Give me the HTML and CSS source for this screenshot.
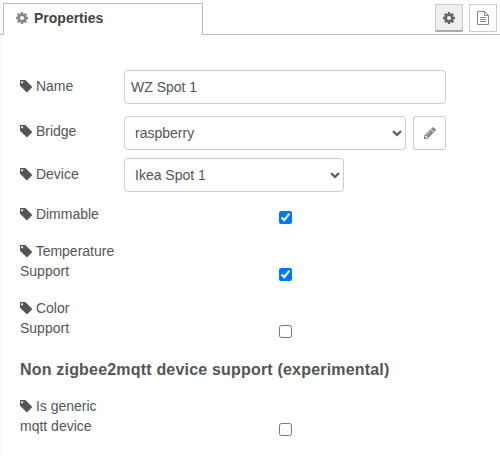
FILE: index.html
```
<!DOCTYPE html>
<html lang="en">
<head>
<meta charset="utf-8">
<title>Properties</title>
<link rel="stylesheet" href="styles.css">
</head>
<body>
<svg class="defs" width="0" height="0">
  <symbol id="tag" viewBox="192 256 1452 1408"><path d="M576 448q0-53-37.500-90.500t-90.500-37.500-90.500 37.500-37.500 90.500 37.500 90.500 90.500 37.500 90.500-37.500 37.500-90.500zm1067 576q0 53-37 90l-491 492q-39 37-91 37-53 0-90-37l-715-716q-38-37-64.500-101t-26.500-117v-416q0-52 38-90t90-38h416q53 0 117 26.500t102 64.500l715 714q37 39 37 91z" transform="translate(0 64)"/></symbol>
  <symbol id="cog" viewBox="128 128 1536 1536"><path d="M1152 896q0-106-75-181t-181-75-181 75-75 181 75 181 181 75 181-75 75-181zm512-109v222q0 12-8 23t-20 13l-185 28q-19 54-39 91 35 50 107 138 10 12 10 25t-9 23q-27 37-99 108t-94 71q-12 0-26-9l-138-108q-44 23-91 38-16 136-29 186-7 28-36 28h-222q-14 0-24.500-8.500t-11.500-21.500l-28-184q-49-16-90-37l-141 107q-10 9-25 9-14 0-25-11-126-114-165-168-7-10-7-23 0-12 8-23 15-21 51-66.500t54-70.500q-27-50-41-99l-183-27q-13-2-21-12.500t-8-23.500v-222q0-12 8-23t19-13l186-28q14-46 39-92-40-57-107-138-10-12-10-24 0-10 9-23 26-36 98.500-107.500t94.500-71.500q13 0 26 10l138 107q44-23 91-38 16-136 29-186 7-28 36-28h222q14 0 24.500 8.500t11.500 21.500l28 184q49 16 90 37l142-107q9-9 24-9 13 0 25 10 129 119 165 170 7 8 7 22 0 12-8 23-15 21-51 66.500t-54 70.500q26 50 41 98l183 28q13 2 21 12.500t8 23.500z"/></symbol>
</svg>
<header class="tabs">
  <div class="tab"><svg class="icon cog"><use href="#cog"/></svg><span>Properties</span></div>
  <div class="tools">
    <button class="tool active" aria-label="Properties"><svg class="icon"><use href="#cog"/></svg></button>
    <button class="tool" aria-label="Description"><svg class="doc" viewBox="0 0 12 14"><path d="M.5.500h7l4 4v9H.5zM7.500.500v4h4M3 6.500h6M3 8.500h6M3 10.500h6"/></svg></button>
  </div>
</header>
<main class="form">
  <div class="row name"><label><svg class="icon tag"><use href="#tag"/></svg> Name</label><input class="field" type="text" value="WZ Spot 1"></div>
  <div class="row bridge"><label><svg class="icon tag"><use href="#tag"/></svg> Bridge</label><select class="field"><option>raspberry</option></select><button class="edit" aria-label="Edit"><svg class="pencil" viewBox="128 128 1536 1536"><path d="M491 1536l91-91-235-235-91 91v107h128v128h107zm523-928q0-22-22-22-10 0-17 7l-542 542q-7 7-7 17 0 22 22 22 10 0 17-7l542-542q7-7 7-17zm-54-192l416 416-832 832h-416v-416zm683 96q0 53-37 90l-166 166-416-416 166-165q36-38 90-38 53 0 91 38l235 234q37 39 37 91z"/></svg></button></div>
  <div class="row device"><label><svg class="icon tag"><use href="#tag"/></svg> Device</label><select class="field"><option>Ikea Spot 1</option></select></div>
  <div class="row check"><label><svg class="icon tag"><use href="#tag"/></svg> Dimmable</label><input type="checkbox" checked></div>
  <div class="row check"><label><svg class="icon tag"><use href="#tag"/></svg> Temperature Support</label><input type="checkbox" checked></div>
  <div class="row check"><label><svg class="icon tag"><use href="#tag"/></svg> Color<br>Support</label><input type="checkbox"></div>
  <h4>Non zigbee2mqtt device support (experimental)</h4>
  <div class="row check"><label><svg class="icon tag"><use href="#tag"/></svg> Is generic mqtt device</label><input type="checkbox"></div>
</main>
</body>
</html>
```
FILE: styles.css
```
* { box-sizing: border-box; }
body {
  margin: 0;
  height: 456px;
  overflow: hidden;
  background: linear-gradient(to right, #f6f6f6, #fff 3px);
  color: #555;
  font: 14px/20px "Liberation Sans", Arial, sans-serif;
}
.defs { display: none; }
.icon { width: 12px; height: 12px; fill: currentColor; }
.tabs {
  display: flex;
  justify-content: space-between;
  height: 35px;
  padding: 3px 3px 0;
  border-bottom: 1px solid #bbb;
}
.tab {
  display: flex;
  gap: 6px;
  width: 200px;
  height: 32px;
  padding: 4px 12px;
  border: 1px solid #bbb;
  border-bottom: 0;
  background: #fff;
  color: #444;
  font-weight: bold;
}
.tab .cog { margin-top: 4px; color: #888; }
.tools { display: flex; gap: 6px; padding-top: 1px; }
.tool, .edit {
  display: flex;
  align-items: center;
  justify-content: center;
  padding: 0;
  border: 1px solid #ccc;
  background: #fff;
}
.tool { width: 28px; height: 28px; color: #666; }
.tool.active { background: #efefef; border-bottom: 2px solid #aaa; }
.doc { width: 12px; height: 14px; fill: none; stroke: #888; }
.form { padding: 35px 20px 0; }
.row { display: flex; }
label { width: 104px; padding-right: 4px; }
.tag { vertical-align: -1px; }
.name { margin-bottom: 12px; }
.name label, .device label { padding-top: 6px; }
.bridge { margin-bottom: 8px; }
.bridge label { padding-top: 5px; }
.device { margin-bottom: 12px; }
.field {
  width: 322px;
  height: 34px;
  margin: 0;
  padding: 6px;
  border: 1px solid #ccc;
  border-radius: 4px;
  background: #fff;
  color: #555;
  font: inherit;
}
.bridge .field { width: 282px; }
.device .field { width: 220px; }
.edit { width: 33px; height: 34px; margin-left: 7px; border-radius: 2px; }
.pencil { width: 12px; height: 12px; fill: #888; }
.check { align-items: flex-end; margin-bottom: 17px; }
.check input { width: 13px; height: 13px; margin: 0 0 0 154.5px; }
h4 { margin: 22px 0 16px; font-size: 16px; line-height: 20px; letter-spacing: .19px; }
```
